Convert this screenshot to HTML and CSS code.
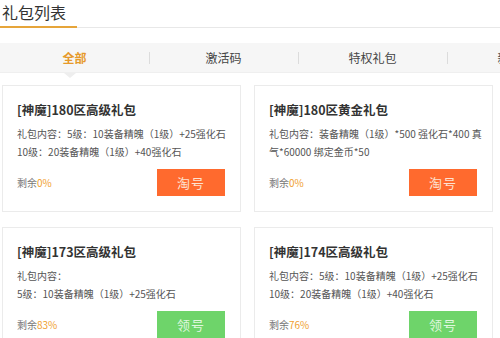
FILE: index.html
```html
<!DOCTYPE html>
<html lang="zh-CN">
<head>
<meta charset="utf-8">
<link rel="stylesheet" href="styles.css">
</head>
<body>
<div class="page">
  <div class="head"><h2 class="head-title">礼包列表</h2></div>
  <div class="tabs">
    <div class="tab active">全部</div>
    <div class="tab">激活码</div>
    <div class="tab">特权礼包</div>
    <div class="tab">新手礼包</div>
  </div>
  <div class="grid">
    <div class="card">
      <div class="card-title">[神魔]180区高级礼包</div>
      <div class="card-desc">礼包内容：5级：10装备精魄（1级）+25强化石<br>10级：20装备精魄（1级）+40强化石</div>
      <div class="card-foot">
        <span class="remain">剩余<em>0%</em></span>
        <span class="btn btn-orange">淘号</span>
      </div>
    </div>
    <div class="card">
      <div class="card-title">[神魔]180区黄金礼包</div>
      <div class="card-desc">礼包内容：装备精魄（1级）*500 强化石*400 真<br>气*60000 绑定金币*50</div>
      <div class="card-foot">
        <span class="remain">剩余<em>0%</em></span>
        <span class="btn btn-orange">淘号</span>
      </div>
    </div>
    <div class="card">
      <div class="card-title">[神魔]173区高级礼包</div>
      <div class="card-desc">礼包内容：<br>5级：10装备精魄（1级）+25强化石</div>
      <div class="card-foot">
        <span class="remain">剩余<em>83%</em></span>
        <span class="btn btn-green">领号</span>
      </div>
    </div>
    <div class="card">
      <div class="card-title">[神魔]174区高级礼包</div>
      <div class="card-desc">礼包内容：5级：10装备精魄（1级）+25强化石<br>10级：20装备精魄（1级）+40强化石</div>
      <div class="card-foot">
        <span class="remain">剩余<em>76%</em></span>
        <span class="btn btn-green">领号</span>
      </div>
    </div>
  </div>
</div>
</body>
</html>
```

FILE: styles.css
```css
* { box-sizing: border-box; }
html, body { margin: 0; padding: 0; background: #fff; }
body {
  font-family: "Noto Sans CJK SC", "Liberation Sans", sans-serif;
  color: #333;
  overflow: hidden;
}
.page { width: 500px; overflow: hidden; }

.head {
  height: 28px;
  border-bottom: 1px solid #e8e8e8;
}
.head-title {
  margin: 0 0 -1px 0;
  width: 77px;
  height: 28px;
  padding-left: 2px;
  font-size: 16px;
  font-weight: normal;
  line-height: 25px;
  color: #333;
  border-bottom: 2px solid #e6a53a;
}

.tabs {
  margin-top: 15px;
  height: 30px;
  background: #f6f6f6;
  border-bottom: 1px solid #efefef;
  display: flex;
  width: 600px;
}
.tab {
  position: relative;
  flex: 0 0 149px;
  text-align: center;
  font-size: 12px;
  line-height: 30px;
  color: #444;
  white-space: nowrap;
}
.tab + .tab::before {
  content: "";
  position: absolute;
  left: 0;
  top: 9px;
  height: 12px;
  border-left: 1px solid #dcdcdc;
}
.tab.active {
  color: #e69a2a;
  font-weight: bold;
}
.tab.active::after {
  content: "";
  position: absolute;
  left: 64px;
  bottom: -6px;
  border-left: 6px solid transparent;
  border-right: 6px solid transparent;
  border-top: 5px solid #eeeeee;
}

.grid {
  display: grid;
  grid-template-columns: 239px 239px;
  column-gap: 13px;
  row-gap: 15px;
  margin-top: 12px;
  padding-left: 2px;
}
.card {
  border: 1px solid #ebebeb;
  padding: 14px 15px 15px 14px;
  background: #fff;
}
.card-title {
  font-size: 12.5px;
  font-weight: bold;
  line-height: 20px;
  color: #333;
  white-space: nowrap;
}
.card-desc {
  margin-top: 5px;
  font-size: 10px;
  line-height: 18px;
  color: #555;
  height: 36px;
  white-space: nowrap;
}
.card-foot {
  margin-top: 8px;
  display: flex;
  justify-content: space-between;
  align-items: center;
}
.remain {
  font-size: 10px;
  color: #777;
}
.remain em {
  font-style: normal;
  color: #f0a030;
}
.btn {
  width: 68px;
  height: 27px;
  line-height: 27px;
  text-align: center;
  font-size: 13px;
  letter-spacing: 1px;
}
.btn-orange { background: #ff6a2e; color: #fde2d2; }
.btn-green { background: #6ed46a; color: #dff7de; }
```
